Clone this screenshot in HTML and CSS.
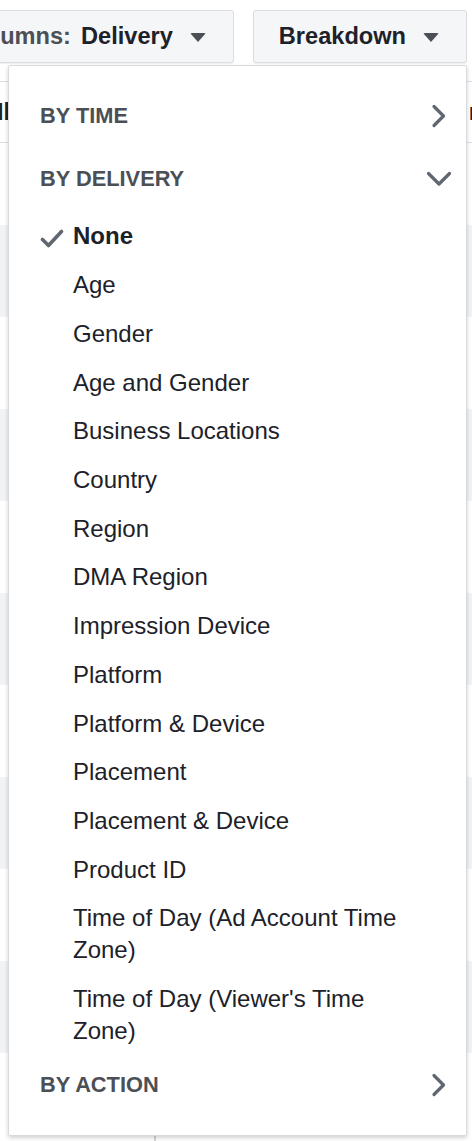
FILE: index.html
```html
<!DOCTYPE html>
<html lang="en">
<head>
<meta charset="utf-8">
<title>Breakdown menu</title>
<link rel="stylesheet" href="styles.css">
</head>
<body>
<div class="page">
  <div class="toolbar">
    <button class="btn"><span class="btn-label">Columns:</span> <span class="btn-value">Delivery</span><span class="caret"></span></button>
    <button class="btn"><span class="btn-value">Breakdown</span><span class="caret"></span></button>
  </div>

  <div class="table">
    <div class="thead">
      <span class="th th-left">Il</span>
      <span class="th th-right">r</span>
    </div>
    <div class="row row-first"><div class="cell"></div></div>
    <div class="row alt"><div class="cell"></div></div>
    <div class="row"><div class="cell"></div></div>
    <div class="row alt"><div class="cell"></div></div>
    <div class="row"><div class="cell"></div></div>
    <div class="row alt"><div class="cell"></div></div>
    <div class="row"><div class="cell"></div></div>
    <div class="row alt"><div class="cell"></div></div>
    <div class="row"><div class="cell"></div></div>
    <div class="row alt"><div class="cell"></div></div>
    <div class="row"><div class="cell"></div></div>
  </div>

  <div class="menu">
    <div class="section-head">
      <span>BY TIME</span>
      <svg class="chev" width="16" height="24" viewBox="0 0 16 24"><path d="M3 2.5 L12.5 12 L3 21.5" fill="none" stroke="#606770" stroke-width="3.2" stroke-linecap="round" stroke-linejoin="round"/></svg>
    </div>
    <div class="section-head">
      <span>BY DELIVERY</span>
      <svg class="chev-down" width="26" height="18" viewBox="0 0 26 18"><path d="M2.5 3.5 L13 14 L23.5 3.5" fill="none" stroke="#606770" stroke-width="3.2" stroke-linecap="round" stroke-linejoin="round"/></svg>
    </div>
    <ul class="list">
      <li class="item selected">
        <svg class="check" width="24" height="20" viewBox="0 0 24 20"><path d="M2.5 10.5 L8.5 16.5 L21.5 2.5" fill="none" stroke="#606770" stroke-width="3.6" stroke-linecap="round" stroke-linejoin="round"/></svg>
        None
      </li>
      <li class="item">Age</li>
      <li class="item">Gender</li>
      <li class="item">Age and Gender</li>
      <li class="item">Business Locations</li>
      <li class="item">Country</li>
      <li class="item">Region</li>
      <li class="item">DMA Region</li>
      <li class="item">Impression Device</li>
      <li class="item">Platform</li>
      <li class="item">Platform &amp; Device</li>
      <li class="item">Placement</li>
      <li class="item">Placement &amp; Device</li>
      <li class="item">Product ID</li>
      <li class="item">Time of Day (Ad Account Time Zone)</li>
      <li class="item">Time of Day (Viewer's Time Zone)</li>
    </ul>
    <div class="section-head last">
      <span>BY ACTION</span>
      <svg class="chev" width="16" height="24" viewBox="0 0 16 24"><path d="M3 2.5 L12.5 12 L3 21.5" fill="none" stroke="#606770" stroke-width="3.2" stroke-linecap="round" stroke-linejoin="round"/></svg>
    </div>
  </div>
</div>
</body>
</html>
```

FILE: styles.css
```css
html, body {
  margin: 0;
  padding: 0;
  background: #ffffff;
}

body {
  font-family: "Liberation Sans", Arial, Helvetica, sans-serif;
  color: #1d2129;
  width: 472px;
  height: 1141px;
  overflow: hidden;
}

.page {
  position: relative;
  width: 472px;
  height: 1141px;
  overflow: hidden;
}

/* toolbar */
.toolbar {
  display: flex;
  justify-content: flex-end;
  gap: 19px;
  padding: 10px 5px 0 0;
  white-space: nowrap;
}

.btn {
  flex: none;
  display: flex;
  align-items: center;
  height: 53px;
  box-sizing: border-box;
  padding: 0 27px 0 25px;
  background: #f5f6f7;
  border: 1px solid #dadde1;
  border-radius: 3px;
  box-shadow: 0 1px 1px rgba(0, 0, 0, 0.06);
  font-family: inherit;
  font-size: 23.6px;
  font-weight: bold;
  color: #1d2129;
}

.btn-label {
  color: #4b4f56;
  margin-right: 10px;
}

.caret {
  width: 0;
  height: 0;
  margin-left: 17px;
  margin-top: 2px;
  border-left: 8.5px solid transparent;
  border-right: 8.5px solid transparent;
  border-top: 9px solid #4b4f56;
  border-radius: 2px;
}

/* background table */
.table {
  margin-top: 18px;
}

.thead {
  display: flex;
  justify-content: space-between;
  align-items: center;
  height: 62px;
  box-sizing: border-box;
  border-top: 1px solid #dddfe2;
  border-bottom: 1px solid #dddfe2;
  font-size: 23.6px;
  font-weight: bold;
  color: #1d2129;
}

.th-left {
  margin-left: -3px;
}

.th-right {
  margin-right: -6px;
}

.row {
  height: 92px;
  display: flex;
}

.row-first {
  height: 82px;
}

.row.alt {
  background: #f2f3f5;
}

.cell {
  width: 154px;
  border-right: 2px solid #d4d6da;
}

/* dropdown menu overlay */
.menu {
  position: absolute;
  top: 65px;
  left: 8px;
  width: 459px;
  box-sizing: border-box;
  padding: 18px 0 18px;
  background: #ffffff;
  border: 1px solid #d8dadf;
  border-radius: 2px;
  box-shadow: 0 2px 4px rgba(0, 0, 0, 0.18);
}

.section-head {
  display: flex;
  justify-content: space-between;
  align-items: center;
  height: 63px;
  padding: 0 18px 0 31px;
  font-size: 21.8px;
  font-weight: bold;
  color: #4b4f56;
}

.chev {
  display: block;
  margin-right: 1px;
}

.chev-down {
  display: block;
  margin-right: -4px;
}

.list {
  list-style: none;
  margin: 2px 0 -2px;
  padding: 0;
}

.item {
  position: relative;
  padding: 8.37px 40px 8.37px 64px;
  font-size: 24px;
  line-height: 32px;
  color: #1d2129;
}

.item.selected {
  font-weight: bold;
}

.check {
  position: absolute;
  left: 31px;
  top: 17px;
}
```
